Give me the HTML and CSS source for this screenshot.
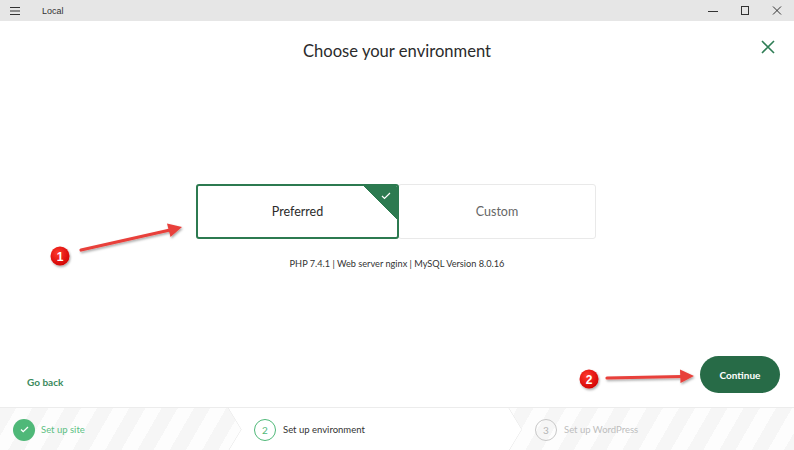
FILE: index.html
```html
<!DOCTYPE html>
<html>
  <head>
    <title>Local</title>
    <link rel="stylesheet" href="styles.css">
  </head>
  <body>
    <div class="titlebar">
      <svg class="menu-icon" width="10" height="8" viewBox="0 0 10 8"><path d="M0 0.5h10M0 4h10M0 7.5h10" stroke="#333" stroke-width="1"/></svg>
      <span class="app-name">Local</span>
      <div class="window-controls">
        <svg width="10" height="10" viewBox="0 0 10 10"><path d="M0 5.5h10" stroke="#333"/></svg>
        <svg width="10" height="10" viewBox="0 0 10 10"><rect x="1.5" y="0.5" width="7" height="8" fill="none" stroke="#333"/></svg>
        <svg width="10" height="10" viewBox="0 0 10 10"><path d="M1 0.5l8 8M9 0.5l-8 8" stroke="#333"/></svg>
      </div>
    </div>

    <div class="main">
      <h1 class="title">Choose your environment</h1>
      <button class="close-btn" aria-label="Close">
        <svg width="14" height="14" viewBox="0 0 14 14"><path d="M1 1l12 12M13 1L1 13" stroke="#2e7d55" stroke-width="1.6"/></svg>
      </button>

      <div class="env-options">
        <div class="env-card selected">
          Preferred
          <span class="corner">
            <svg width="10" height="8" viewBox="0 0 10 8"><path d="M1 4l2.5 2.5L9 1" fill="none" stroke="#fff" stroke-width="1.2"/></svg>
          </span>
        </div>
        <div class="env-card">Custom</div>
      </div>
      <p class="env-specs">PHP 7.4.1 | Web server nginx | MySQL Version 8.0.16</p>

      <div class="actions">
        <a class="go-back" href="#">Go back</a>
        <button class="continue">Continue</button>
      </div>
    </div>

    <div class="steps">
      <div class="step done">
        <span class="step-num">
          <svg width="9" height="7" viewBox="0 0 9 7"><path d="M1 3.5l2.2 2.2L8 1" fill="none" stroke="#fff" stroke-width="1.3"/></svg>
        </span>
        Set up site
      </div>
      <div class="step current">
        <span class="step-num">2</span>
        Set up environment
        <svg class="chevrons" width="294" height="43" viewBox="0 0 294 43"><path d="M0 0l13 21.5L0 43M281 0l13 21.5L281 43" fill="none" stroke="#e2e2e2"/></svg>
      </div>
      <div class="step todo">
        <span class="step-num">3</span>
        Set up WordPress
      </div>
    </div>

    <svg class="annotations" width="794" height="450" viewBox="0 0 794 450">
      <defs>
        <filter id="shadow" x="-20%" y="-50%" width="140%" height="200%">
          <feDropShadow dx="1" dy="1.5" stdDeviation="1.2" flood-color="#000" flood-opacity="0.35"/>
        </filter>
        <radialGradient id="badge" cx="40%" cy="35%" r="70%">
          <stop offset="0" stop-color="#ff3b2f"/>
          <stop offset="1" stop-color="#d10000"/>
        </radialGradient>
      </defs>
      <g filter="url(#shadow)">
        <path d="M81 250L170 230" stroke="#e8403b" stroke-width="3.2" stroke-linecap="round"/>
        <path d="M182 227L167 223.5L170.5 237Z" fill="#e8403b"/>
        <path d="M607 378L682 376.5" stroke="#e8403b" stroke-width="3.2" stroke-linecap="round"/>
        <path d="M694 376L680 369.5L680.5 383Z" fill="#e8403b"/>
        <circle cx="60" cy="256" r="9.5" fill="url(#badge)"/>
        <circle cx="589" cy="379" r="9.5" fill="url(#badge)"/>
      </g>
      <text x="60" y="260.5" class="badge-text">1</text>
      <text x="589" y="383.5" class="badge-text">2</text>
    </svg>
  </body>
</html>
```

FILE: styles.css
```css
body {
  margin: 0;
  width: 794px;
  height: 450px;
  overflow: hidden;
  position: relative;
  font-family: Lato, "Open Sans", sans-serif;
  color: #333;
  background: #fff;
}
.titlebar {
  height: 21px;
  background: #e6e6e6;
  display: flex;
  align-items: center;
  padding-left: 10px;
}
.menu-icon {
  display: block;
}
.app-name {
  margin-left: 22px;
  font-family: "Liberation Sans", Arial, sans-serif;
  font-size: 9px;
  color: #333;
}
.window-controls {
  margin-left: auto;
  display: flex;
  gap: 22px;
  padding-right: 12px;
}
.window-controls svg {
  display: block;
}
.main {
  position: relative;
  height: 386px;
  display: flex;
  flex-direction: column;
  align-items: center;
}
.title {
  margin: 19px 0 0;
  font-size: 16.6px;
  line-height: 22px;
  font-weight: 400;
  color: #2b2b2b;
}
.close-btn {
  position: absolute;
  top: 19px;
  right: 19px;
  border: 0;
  padding: 0;
  background: none;
}
.close-btn svg {
  display: block;
}
.env-options {
  display: flex;
  margin-top: 122px;
  margin-right: 2px;
}
.env-card {
  position: relative;
  width: 198px;
  height: 55px;
  box-sizing: border-box;
  border: 1px solid #e9e9e9;
  border-radius: 3px;
  display: flex;
  align-items: center;
  justify-content: center;
  font-size: 12.5px;
  color: #666;
  overflow: hidden;
}
.env-card.selected {
  width: 203px;
  border: 2px solid #2c7a50;
  color: #2b2b2b;
  z-index: 1;
  margin-right: -1px;
}
.corner {
  position: absolute;
  top: 0;
  right: 0;
  width: 33px;
  height: 33px;
  background: linear-gradient(45deg, transparent 50%, #2c7a50 50%);
}
.corner svg {
  position: absolute;
  top: 6px;
  right: 6px;
}
.env-specs {
  margin: 18px 0 0;
  font-size: 9.2px;
  line-height: 14px;
  color: #333;
}
.actions {
  margin-top: auto;
  margin-bottom: 14px;
  width: 100%;
  box-sizing: border-box;
  padding: 0 14px 0 27px;
  display: flex;
  align-items: center;
  justify-content: space-between;
}
.go-back {
  align-self: flex-end;
  margin-bottom: 4px;
  line-height: 14px;
  color: #3a8a5d;
  font-size: 10px;
  font-weight: 700;
  text-decoration: none;
}
.continue {
  width: 80px;
  height: 37px;
  border: 0;
  border-radius: 19px;
  background: #276b47;
  color: #fff;
  font-family: inherit;
  font-size: 10px;
  font-weight: 700;
}
.steps {
  height: 43px;
  border-top: 1px solid #ececec;
  display: flex;
  background: repeating-linear-gradient(120deg, #f6f6f6 0 14px, #fdfdfd 14px 28px);
  font-size: 9.5px;
}
.step {
  position: relative;
  display: flex;
  align-items: center;
  gap: 8px;
}
.step-num {
  width: 22px;
  height: 22px;
  box-sizing: border-box;
  border-radius: 50%;
  display: flex;
  align-items: center;
  justify-content: center;
  font-size: 10px;
}
.step.done {
  width: 228px;
  padding-left: 13px;
  box-sizing: border-box;
  color: #5cbf83;
  gap: 6px;
}
.step.done .step-num {
  background: #4fb878;
}
.step.current {
  width: 294px;
  padding-left: 26px;
  box-sizing: border-box;
  background: #fff;
  clip-path: polygon(0 0, 281px 0, 294px 50%, 281px 100%, 0 100%, 13px 50%);
  margin-right: -13px;
  color: #333;
  gap: 7px;
}
.step.current .step-num {
  border: 1.5px solid #4fb878;
  color: #4fb878;
}
.chevrons {
  position: absolute;
  top: 0;
  left: 0;
}
.step.todo {
  flex: 1;
  padding-left: 26px;
  color: #bdbdbd;
  gap: 7px;
}
.step.todo .step-num {
  border: 1.5px solid #c8c8c8;
  color: #b5b5b5;
}
.annotations {
  position: absolute;
  top: 0;
  left: 0;
  pointer-events: none;
}
.badge-text {
  fill: #fff;
  font-family: "Liberation Sans", Arial, sans-serif;
  font-weight: 700;
  font-size: 12px;
  text-anchor: middle;
}
```
